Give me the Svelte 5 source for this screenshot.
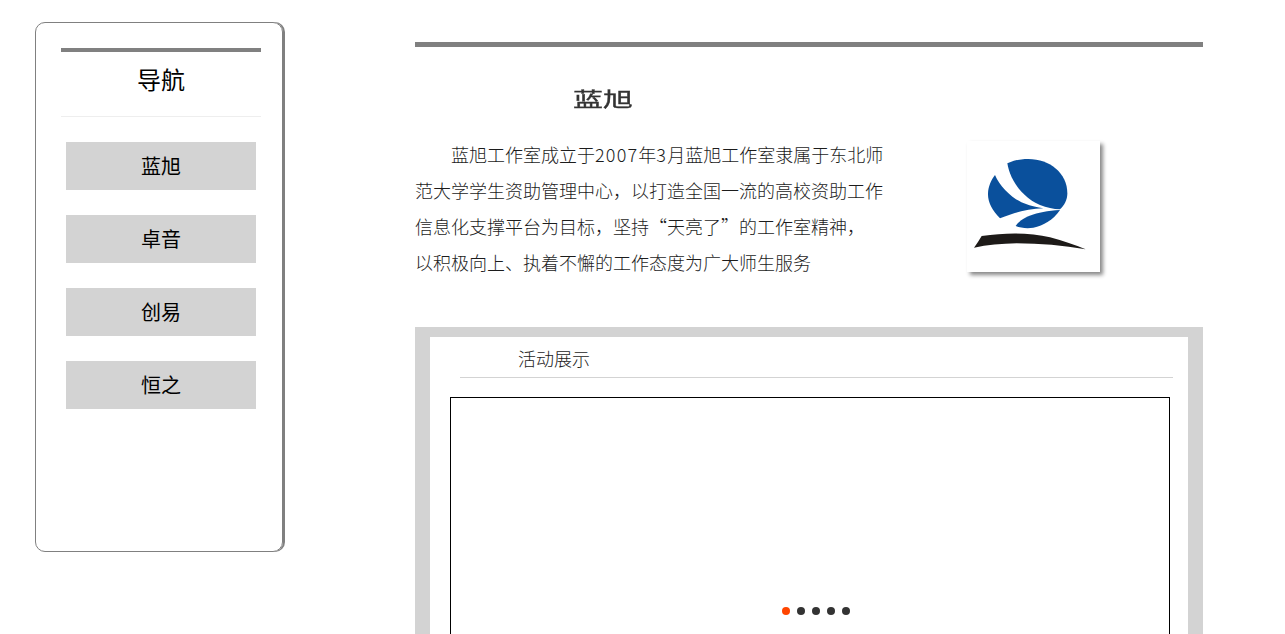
<script>
  const nav = ['蓝旭', '卓音', '创易', '恒之'];
  const lines = [
    [['蓝旭工作室成立于'], ['2007', true], ['年'], ['3', true], ['月蓝旭工作室隶属于东北师']],
    [['范大学学生资助管理中心，以打造全国一流的高校资助工作']],
    [['信息化支撑平台为目标，坚持“天亮了”的工作室精神，']],
    [['以积极向上、执着不懈的工作态度为广大师生服务']]
  ];
  const dots = [0, 1, 2, 3, 4];
</script>

<div class="page">
  <aside class="sidebar">
    <div class="side-head">导航</div>
    <nav class="nav">
      {#each nav as item}
        <div class="nav-item">{item}</div>
      {/each}
    </nav>
  </aside>

  <main class="main">
    <section class="intro">
      <div class="intro-text">
        <h2 class="title"><span>蓝旭</span></h2>
        <div class="para">
          {#each lines as line, i}
            <div class={i === 0 ? 'line first' : 'line'}>{#each line as part}{#if part[1]}<span class="num">{part[0]}</span>{:else}{part[0]}{/if}{/each}</div>
          {/each}
        </div>
      </div>
      <div class="logo">
        <svg viewBox="51 33 399 393" width="133" height="131" aria-label="蓝旭 logo">
          <rect x="51" y="33" width="399" height="393" fill="#fff" />
          <path fill="#0a509c" d="M172 100 C195 90 215 87 235 87 C300 87 352 130 352 190 C352 210 343 226 330 238 C310 237 290 233 270 225 C215 200 180 150 172 100 Z" />
          <path fill="#0a509c" d="M135 135 C150 170 185 205 222 220 C245 229 262 233 280 235 C235 237 190 248 150 265 C125 240 113 215 114 190 C115 170 123 150 135 135 Z" />
          <path fill="#0a509c" d="M330 240 C310 270 280 287 250 293 C232 296 212 294 197 288 C212 264 255 244 330 240 Z" />
          <path fill="#1d1a18" d="M95 318 C170 307 245 308 300 322 C340 332 375 345 407 358 C340 346 270 340 200 340 C155 341 110 345 72 353 C80 342 88 330 95 318 Z" />
        </svg>
      </div>
    </section>

    <section class="panel">
      <div class="panel-title"><span>活动展示</span></div>
      <div class="carousel">
        <div class="dots">
          {#each dots as d}
            <span class={d === 0 ? 'dot active' : 'dot'}></span>
          {/each}
        </div>
      </div>
    </section>
  </main>
</div>

<style>
  :global(body) {
    margin: 0;
    background: #fff;
    overflow: hidden;
  }
  .page {
    display: flex;
    align-items: flex-start;
    width: 1285px;
    height: 634px;
    overflow: hidden;
    font-family: "Noto Sans CJK SC", "Liberation Sans", sans-serif;
    font-weight: 400;
    color: #333;
  }
  .sidebar {
    box-sizing: border-box;
    flex: none;
    width: 248px;
    height: 530px;
    margin: 22px 0 0 35px;
    padding: 25px 24px 0 25px;
    border: 1px solid #808080;
    border-radius: 10px;
    box-shadow: 2px 0 0 #808080;
  }
  .side-head {
    width: 200px;
    height: 64px;
    border-top: 4px solid #808080;
    border-bottom: 1px solid #eee;
    font-size: 24px;
    line-height: 54px;
    text-align: center;
    color: #000;
  }
  .nav {
    display: flex;
    flex-direction: column;
    gap: 25px;
    margin: 25px 0 0 5px;
  }
  .nav-item {
    width: 190px;
    height: 48px;
    background: #d3d3d3;
    color: #000;
    font-size: 20px;
    line-height: 48px;
    text-align: center;
  }
  .main {
    flex: none;
    width: 788px;
    margin: 42px 0 0 132px;
    border-top: 5px solid #808080;
  }
  .intro {
    display: flex;
    height: 280px;
  }
  .intro-text {
    width: 552px;
  }
  .title {
    margin: 33px 0 0;
    padding-left: 158px;
    font-size: 30px;
    line-height: 36px;
    font-weight: 400;
    color: #333;
    -webkit-text-stroke: 0.5px #333;
  }
  .title span {
    display: inline-block;
    transform: scaleY(0.68);
  }
  .para {
    margin-top: 20px;
    font-size: 18px;
    line-height: 36px;
    font-weight: 300;
    color: #1c1c1c;
  }
  .line {
    white-space: nowrap;
  }
  .first {
    text-indent: 36px;
  }
  .num {
    letter-spacing: 1.2px;
  }
  .logo {
    flex: none;
    width: 133px;
    height: 131px;
    margin-top: 94px;
    box-shadow: 3px 3px 4px #888;
  }
  .logo svg {
    display: block;
    filter: blur(0.4px);
  }
  .panel {
    box-sizing: border-box;
    height: 320px;
    border: solid #d3d3d3;
    border-width: 10px 15px 0;
    padding: 0 15px 0 30px;
  }
  .panel-title {
    height: 40px;
    border-bottom: 1px solid #d3d3d3;
    font-size: 18px;
    line-height: 42px;
    padding-left: 58px;
    font-weight: 300;
    color: #1c1c1c;
  }
  .carousel {
    position: relative;
    box-sizing: border-box;
    width: 720px;
    height: 300px;
    margin: 19px 0 0 -10px;
    border: 1px solid #000;
  }
  .dots {
    position: absolute;
    left: 331px;
    top: 209px;
    display: flex;
    gap: 7px;
  }
  .dot {
    width: 8px;
    height: 8px;
    border-radius: 50%;
    background: #333;
  }
  .active {
    background: #ff4500;
  }
</style>
